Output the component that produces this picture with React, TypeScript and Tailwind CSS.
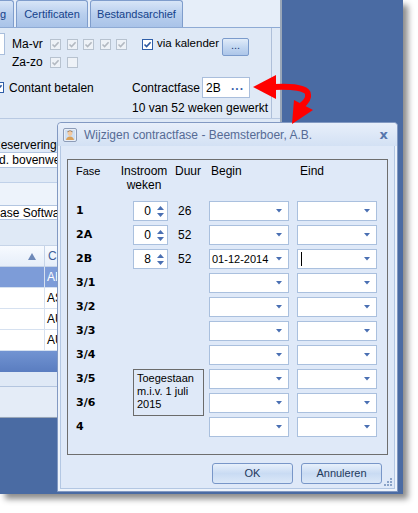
import React from 'react';

const sans = "font-['Liberation_Sans',Arial,sans-serif]";
const bold = "font-['DejaVu_Sans',Verdana,sans-serif] font-bold";

const Check = ({ on, disabled }: { on?: boolean; disabled?: boolean }) => (
  <span
    className={`flex h-[11px] w-[11px] shrink-0 items-center justify-center border ${
      disabled ? 'border-[#b7c2cf] bg-[#eef2f7]' : 'border-[#2f5ea8] bg-white'
    }`}
  >
    {on && (
      <svg width="9" height="9" viewBox="0 0 9 9">
        <path
          d="M1.5 4.5 L3.6 6.6 L7.6 2.2"
          fill="none"
          stroke={disabled ? '#b3b9c1' : '#2c58a0'}
          strokeWidth="1.6"
        />
      </svg>
    )}
  </span>
);

const DownArrow = () => (
  <svg width="6" height="4" viewBox="0 0 6 4" className="shrink-0">
    <path d="M0 0 H6 L3 3.5 Z" fill="#4a6fb2" />
  </svg>
);

const Combo = ({ value, cursor }: { value?: string; cursor?: boolean }) => (
  <div className="flex h-[20px] w-[80px] items-center border border-[#aac0de] bg-white pl-[2px] pr-[6px]">
    {cursor && <span className="ml-[1px] h-[14px] w-px bg-black" />}
    <span className="flex-1 text-[11px] text-black">{value}</span>
    <DownArrow />
  </div>
);

const Spinner = ({ value }: { value: string }) => (
  <div className="flex h-[20px] w-[35px] items-center border border-[#aac0de] bg-white">
    <span className="flex-1 pr-[6px] text-right text-[12px] text-black">{value}</span>
    <div className="mr-[3px] flex flex-col gap-[3px]">
      <svg width="7" height="4" viewBox="0 0 7 4">
        <path d="M0 4 L3.5 0 L7 4 Z" fill="#4a6fb2" />
      </svg>
      <svg width="7" height="4" viewBox="0 0 7 4">
        <path d="M0 0 H7 L3.5 4 Z" fill="#4a6fb2" />
      </svg>
    </div>
  </div>
);

const rows = [
  { fase: '1', instroom: '0', duur: '26' },
  { fase: '2A', instroom: '0', duur: '52' },
  { fase: '2B', instroom: '8', duur: '52', begin: '01-12-2014', cursor: true },
  { fase: '3/1' },
  { fase: '3/2' },
  { fase: '3/3' },
  { fase: '3/4' },
  { fase: '3/5' },
  { fase: '3/6' },
  { fase: '4' },
];

const Tab = ({ children, w }: { children: React.ReactNode; w: string }) => (
  <div
    className={`${w} flex h-[27px] items-center justify-center rounded-t-[3px] border border-b-0 border-[#7f9dcc] bg-gradient-to-b from-[#d7e5f7] via-[#b9cfee] to-[#a9c3e8] text-[11px] text-[#15428b]`}
  >
    {children}
  </div>
);

const MainWindow = () => (
  <div className="absolute left-0 top-0 h-[418px] w-[282px] overflow-hidden border-r-2 border-b border-[#9aa7b8] bg-[#dfe9f6]">
    {/* tabs */}
    <div className="flex h-[28px] items-end gap-[2px] border-b border-[#8eaad4] bg-[#e6eef9]">
      <div className="flex h-[27px] w-[14px] items-center rounded-tr-[3px] border border-l-0 border-b-0 border-[#7f9dcc] bg-gradient-to-b from-[#d7e5f7] via-[#b9cfee] to-[#a9c3e8] text-[11px] text-[#15428b]">
        g
      </div>
      <Tab w="w-[72px]">Certificaten</Tab>
      <Tab w="w-[93px]">Bestandsarchief</Tab>
    </div>

    {/* top panel */}
    <div className="mr-[8px] h-[90px] border-r border-[#aebfd9] pt-[5px] text-[12px] text-black">
      <div className="flex h-[22px] items-center">
        <div className="h-[22px] w-[5px] shrink-0 border border-l-0 border-[#a9bedc] bg-white" />
        <span className="ml-[7px] w-[38px] shrink-0">Ma-vr</span>
        <div className="flex w-[92px] shrink-0 gap-[5.5px]">
          <Check on disabled />
          <Check on disabled />
          <Check on disabled />
          <Check on disabled />
          <Check on disabled />
        </div>
        <div className="flex w-[80px] shrink-0 items-center gap-[4px]">
          <Check on />
          <span className="text-[11.5px]">via kalender</span>
        </div>
        <div className="mt-[5px] flex h-[18px] w-[27px] shrink-0 items-center justify-center self-start rounded-[2px] border border-[#7b9bcc] bg-gradient-to-b from-[#e1ecf9] via-[#c3d7f1] to-[#adc6e9] pb-[3px] text-[11px] text-[#1d3f78]">
          ...
        </div>
      </div>
      <div className="flex h-[14px] items-center">
        <span className="ml-[12px] w-[38px]">Za-zo</span>
        <div className="flex gap-[5.5px]">
          <Check on disabled />
          <Check disabled />
        </div>
      </div>
      <div className="mt-[8px] flex h-[21px] items-center">
        <div className="-ml-[7px]">
          <Check on />
        </div>
        <span className="ml-[5px] w-[123px]">Contant betalen</span>
        <span className="w-[70px]">Contractfase</span>
        <div className="flex h-[21px] w-[48px] items-center border border-[#a9bedc] bg-white pl-[3px] pr-[5px]">
          <span className="flex-1">2B</span>
          <span className="pb-[4px] font-bold tracking-[1px] text-[#3b63ad]">...</span>
        </div>
      </div>
      <div className="flex h-[20px] items-center pl-[132px]">10 van 52 weken gewerkt</div>
    </div>

    {/* lower left area */}
    <div className="h-[34px] border-t border-[#b8c9e2] pt-[17px] text-[12px] text-black">
      <span className="-ml-[8px]">Reserveringen</span>
    </div>
    <div className="flex h-[16px] items-center border-y border-[#b3c6e1] bg-white text-[12px] text-black">
      <span className="-ml-[1px]">d. bovenwerk</span>
    </div>
    <div className="h-[14px]" />
    <div className="h-[23px] border-t border-[#c0d1e9] bg-[#edf3fb]" />
    <div className="flex h-[15px] items-center border-y border-[#b3c6e1] bg-white text-[12px] text-black">
      <span className="-ml-[8px]">Base Software</span>
    </div>
    <div className="h-[25px]" />
    <div className="flex h-[22px] items-center border-y border-[#c6d4e8] bg-gradient-to-b from-[#f7faff] to-[#e6eef9]">
      <div className="flex h-full w-[45px] items-center justify-end border-r border-[#c6d4e8] pr-[8px]">
        <svg width="8" height="7" viewBox="0 0 8 7">
          <path d="M0 7 L4 0 L8 7 Z" fill="#6d88b8" />
        </svg>
      </div>
      <span className="pl-[3px] text-[12px] text-[#3d5f99]">C</span>
    </div>
    {['AF', 'AS', 'AU', 'AU'].map((c, i) => (
      <div
        key={i}
        className={`flex h-[21px] items-center border-b border-[#d6e1f0] ${i === 0 ? 'bg-[#7d9cd8] text-white' : 'bg-white text-black'}`}
      >
        <div className="h-full w-[45px] border-r border-[#d6e1f0]" />
        <span className="pl-[2px] text-[12px]">{c}</span>
      </div>
    ))}
    <div className="h-[21px] bg-gradient-to-b from-[#7294d2] to-[#5a7dc0]" />
    <div className="h-[15px] border-b border-[#b3c5df] bg-[#dfe9f6]" />
    <div className="h-[29px] bg-[#e4ecf7]" />
  </div>
);

const Dialog = () => (
  <div className="absolute left-[57px] top-[122px] flex h-[370px] w-[341px] flex-col rounded-t-[4px] border border-[#8299c2] bg-[#edf3fb]">
    {/* title bar */}
    <div className="flex h-[23px] shrink-0 items-center rounded-t-[4px] bg-gradient-to-b from-[#e8effa] to-[#d3e1f4] pl-[5px] pr-[9px]">
      <svg width="14" height="14" viewBox="0 0 14 14" className="shrink-0">
        <rect x="0.5" y="0.5" width="13" height="13" rx="1.5" fill="#e9eef6" stroke="#8c9cb8" />
        <rect x="2" y="2" width="10" height="10" fill="#cfe0f4" />
        <circle cx="7" cy="5.5" r="2.4" fill="#f2c9a0" />
        <path d="M4.3 4.6 Q7 1.6 9.7 4.6 L9.5 3.6 Q7 1.4 4.5 3.6 Z" fill="#8a5a2b" />
        <path d="M3 12 Q3.6 8.4 7 8.4 Q10.4 8.4 11 12 Z" fill="#d9a15a" />
      </svg>
      <span className="ml-[7px] flex-1 text-[12px] text-[#566b95]">Wijzigen contractfase - Beemsterboer, A.B.</span>
      <span className="font-['DejaVu_Sans',sans-serif] text-[13px] font-bold text-[#5676ad]">x</span>
    </div>

    <div className="relative mx-[2px] mb-[2px] flex-1 border border-t-0 border-[#b3c7e3] bg-[#dfe9f8]">
      {/* group box */}
      <div className="mx-[6px] mt-[13px] border border-[#6e6e6e] pb-[15px] pl-[8px]">
        <div className="flex pt-[4px] text-[12px] leading-[14px] text-black">
          <span className="w-[44px] text-[11px]">Fase</span>
          <span className="w-[48px] text-center">
            Instroom
            <br />
            weken
          </span>
          <span className="ml-[7px] w-[36px]">Duur</span>
          <span className="w-[89px]">Begin</span>
          <span>Eind</span>
        </div>
        <div className="mt-[7px] grid grid-cols-[57px_35px_41px_80px_88px] grid-rows-[repeat(10,24px)] items-center">
          {rows.map((r, i) => (
            <React.Fragment key={r.fase}>
              <span className={`${bold} col-start-1 text-[11px] leading-[14px] text-black`} style={{ gridRow: i + 1 }}>
                {r.fase}
              </span>
              {r.instroom && (
                <div className="col-start-2" style={{ gridRow: i + 1 }}>
                  <Spinner value={r.instroom} />
                </div>
              )}
              {r.duur && (
                <span className="col-start-3 pl-[10px] text-[12px] text-black" style={{ gridRow: i + 1 }}>
                  {r.duur}
                </span>
              )}
              <div className="col-start-4" style={{ gridRow: i + 1 }}>
                <Combo value={r.begin} />
              </div>
              <div className="col-start-5 pl-[8px]" style={{ gridRow: i + 1 }}>
                <Combo cursor={r.cursor} />
              </div>
            </React.Fragment>
          ))}
          <div className="col-span-3 col-start-2 row-span-2 row-start-8 mt-[2px] h-[47px] w-[71px] border border-[#6b6b6b] px-[3px] pt-[2px] text-[11px] leading-[13px] text-black">
            Toegestaan m.i.v. 1 juli 2015
          </div>
        </div>
      </div>

      {/* buttons */}
      <div className="mt-[8px] flex justify-end gap-[8px] pr-[12px]">
        {['OK', 'Annuleren'].map((b) => (
          <div
            key={b}
            className="flex h-[21px] w-[81px] items-center justify-center rounded-[3px] border border-[#7896c8] bg-gradient-to-b from-[#e7f0fb] via-[#c9dbf3] to-[#dbe8f8] text-[11px] text-[#1e395b]"
          >
            {b}
          </div>
        ))}
      </div>
      <div className="absolute bottom-[2px] right-[2px] grid grid-cols-3 gap-[1px]">
        {[0, 0, 1, 0, 1, 1, 1, 1, 1].map((v, i) => (
          <span key={i} className={`h-[2px] w-[2px] ${v ? 'bg-[#8aa3c8]' : ''}`} />
        ))}
      </div>
    </div>
  </div>
);

const RedArrow = () => (
  <svg className="pointer-events-none absolute left-0 top-0" width="418" height="513" viewBox="0 0 418 513">
    <path d="M253 87 L276 75 L276 99 Z" fill="#ff0000" />
    <path d="M274 87 C292 86 307 88 308 94 C309 99 305 103 301 106" fill="none" stroke="#ff0000" strokeWidth="6" />
    <path d="M292 124 L294 100 L313 110 Z" fill="#ff0000" />
  </svg>
);

export default function App() {
  return (
    <div className={`${sans} relative h-[513px] w-[418px] overflow-hidden bg-white`}>
      <div className="absolute left-0 top-0 h-[494px] w-[403px] bg-[#4a6ba3] shadow-[5px_5px_6px_rgba(0,0,0,0.45)]" />
      <MainWindow />
      <Dialog />
      <RedArrow />
    </div>
  );
}
